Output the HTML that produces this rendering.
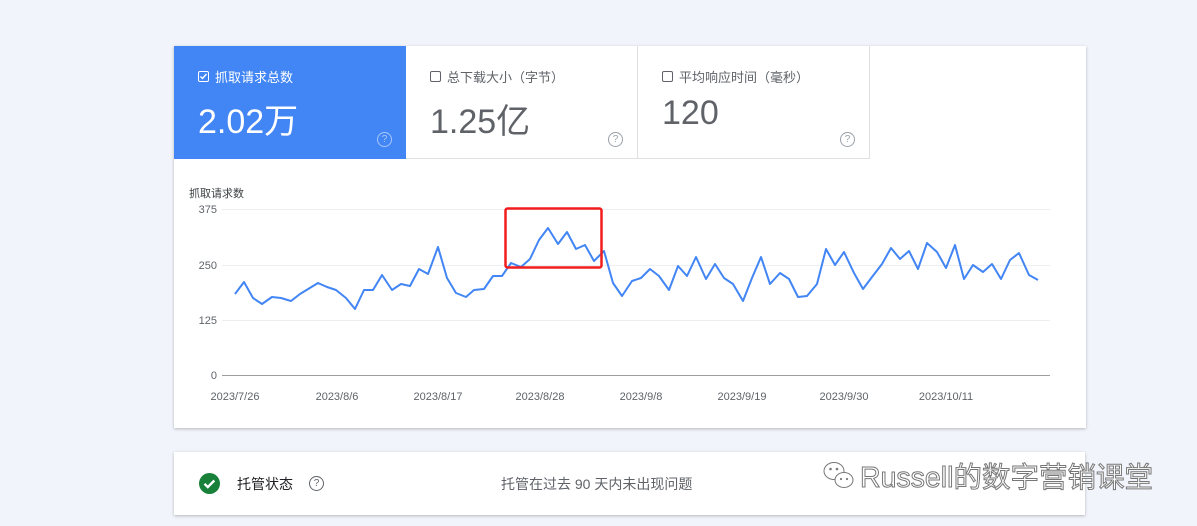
<!DOCTYPE html>
<html><head><meta charset="utf-8"><style>
body{margin:0;width:1197px;height:526px;background:#f1f4fb;font-family:"Liberation Sans","Noto Sans CJK SC",sans-serif;position:relative;overflow:hidden}
.card{position:absolute;left:174px;top:46px;width:912px;height:382px;background:#fff;box-shadow:0 1px 3px rgba(0,0,0,.25)}
.tile{position:absolute;top:0;height:113px;width:232px;border-right:1px solid #e0e0e0;border-bottom:1px solid #e0e0e0;box-sizing:border-box}
.lbl{position:absolute;left:24px;top:21px;font-size:13px;color:#5f6368;display:flex;align-items:center}
.cb{width:11px;height:11px;border:1.5px solid #5f6368;border-radius:2px;margin-right:6px;box-sizing:border-box}
.val{position:absolute;left:24px;top:48px;font-size:34px;color:#5f6368}
.q{position:absolute;right:14px;top:86px;width:13px;height:13px;border:1.3px solid #9aa0a6;border-radius:50%;font-size:10px;line-height:13px;text-align:center;color:#9aa0a6}
.card2{position:absolute;left:174px;top:452px;width:911px;height:63px;background:#fff;box-shadow:0 1px 3px rgba(0,0,0,.25)}
</style></head><body>
<div class="card">
 <div class="tile" style="left:0;background:#4285f4;border:none">
  <div class="lbl" style="color:#fff"><div class="cb" style="border-color:#fff;position:relative"><svg width="9" height="9" style="position:absolute;left:0;top:0" viewBox="0 0 9 9"><path d="M1.5 4.5l2 2 4-4.5" stroke="#fff" fill="none" stroke-width="1.4"/></svg></div>抓取请求总数</div>
  <div class="val" style="color:#fff">2.02万</div>
  <div class="q" style="border-color:#a8c7fa;color:#a8c7fa">?</div>
 </div>
 <div class="tile" style="left:232px"><div class="lbl"><div class="cb"></div>总下载大小（字节）</div><div class="val">1.25亿</div><div class="q">?</div></div>
 <div class="tile" style="left:464px"><div class="lbl"><div class="cb"></div>平均响应时间（毫秒）</div><div class="val">120</div><div class="q">?</div></div>
 <div style="position:absolute;left:15px;top:139px;font-size:11px;color:#3c4043">抓取请求数</div>
</div>
<svg style="position:absolute;left:0;top:0" width="1197" height="526">
 <g stroke="#eceff1" stroke-width="1"><line x1="222" y1="209.5" x2="1050" y2="209.5"/><line x1="222" y1="265.5" x2="1050" y2="265.5"/><line x1="222" y1="320.5" x2="1050" y2="320.5"/></g>
 <line x1="222" y1="375.5" x2="1050" y2="375.5" stroke="#9e9e9e"/>
 <g font-size="11" fill="#5f6368" text-anchor="end" font-family="Liberation Sans"><text x="217" y="213">375</text><text x="217" y="269">250</text><text x="217" y="324">125</text><text x="217" y="379">0</text></g>
 <g font-size="11" fill="#5f6368" text-anchor="middle" font-family="Liberation Sans"><text x="235" y="400">2023/7/26</text><text x="337" y="400">2023/8/6</text><text x="438" y="400">2023/8/17</text><text x="540" y="400">2023/8/28</text><text x="641" y="400">2023/9/8</text><text x="742" y="400">2023/9/19</text><text x="844" y="400">2023/9/30</text><text x="946" y="400">2023/10/11</text></g>
 <polyline fill="none" stroke="#4285f4" stroke-width="2" stroke-linejoin="round" points="235,294 244,282 253,298 262,304 272,297 281,298 291,301 300,294 318,283 327,287 336,290 346,298 355,309 364,290 373,290 382,275 392,290 401,284 410,286 419,269 428,274 438,247 447,278 456,293 466,297 474,290 484,289 493,276 502,276 511,263 521,267 530,259 539,240 548,228 558,244 567,232 576,249 585,245 594,261 604,251 613,283 622,296 632,281 641,278 650,269 659,276 669,290 678,266 687,276 696,257 706,279 715,264 724,278 733,284 743,301 752,278 761,257 770,284 780,273 789,279 798,297 807,296 817,284 826,249 835,265 844,252 854,273 863,289 872,277 882,264 891,248 900,259 909,251 918,269 927,243 937,252 946,268 955,245 964,279 973,265 983,272 992,264 1001,279 1010,260 1019,253 1029,275 1038,280"/>
 <rect x="505.5" y="208.5" width="96" height="59" rx="2" fill="none" stroke="#f21d1d" stroke-width="2.5"/>
</svg>
<div class="card2">
 <svg style="position:absolute;left:25px;top:21px" width="21" height="21" viewBox="0 0 21 21"><circle cx="10.5" cy="10.5" r="10.5" fill="#188038"/><path d="M5.5 10.8l3.3 3.3 6.5-6.6" stroke="#fff" stroke-width="2.4" fill="none"/></svg>
 <div style="position:absolute;left:63px;top:22px;font-size:14px;color:#202124">托管状态</div>
 <div class="q" style="left:135px;top:24px;border-color:#5f6368;color:#5f6368">?</div>
 <div style="position:absolute;left:327px;top:22px;font-size:14px;color:#5f6368">托管在过去 90 天内未出现问题</div>
</div>
<div style="position:absolute;left:860px;top:455px;font-size:28.5px;white-space:nowrap;color:#fff;-webkit-text-stroke:1px #777;font-family:'Liberation Sans','Noto Sans CJK SC',sans-serif">Russell的数字营销课堂</div>
<svg style="position:absolute;left:822px;top:459px" width="34" height="34" viewBox="0 0 34 34"><ellipse cx="12" cy="12" rx="10" ry="8.5" fill="#fff" stroke="#777"/><ellipse cx="22" cy="21" rx="9" ry="7.5" fill="#fff" stroke="#777"/><circle cx="8.5" cy="10" r="1.3" fill="#777"/><circle cx="15" cy="10" r="1.3" fill="#777"/><circle cx="19" cy="20" r="1.1" fill="#777"/><circle cx="25" cy="20" r="1.1" fill="#777"/></svg>
</body></html>
